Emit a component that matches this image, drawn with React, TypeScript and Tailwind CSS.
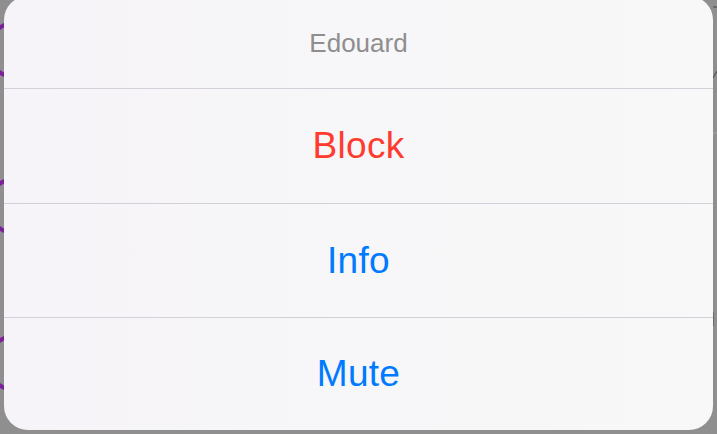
import React from "react";

function EdgeRings() {
  return (
    <svg width="4" height="434" viewBox="0 0 4 434" className="block shrink-0">
      {[50, 206, 363].map((cy) => (
        <circle key={cy} cx="15" cy={cy} r="27" fill="none" stroke="#7d1f9c" strokeWidth="4" />
      ))}
    </svg>
  );
}

function EdgeMarks() {
  return (
    <svg width="4" height="434" viewBox="0 0 4 434" className="block shrink-0">
      <path d="M0 7 H4" stroke="#5f5f5f" strokeWidth="1.5" />
      <path d="M0 78 L4 71" stroke="#5f5f5f" strokeWidth="1.5" />
      <path d="M0 133 H4" stroke="#a9a9a9" strokeWidth="1" />
      <path d="M0 312 V326" stroke="#6a6a6a" strokeWidth="2" />
    </svg>
  );
}

const actions = [
  { label: "Block", color: "text-[#ff3b30]", height: "h-[115px]" },
  { label: "Info", color: "text-[#007aff]", height: "h-[114px]" },
  { label: "Mute", color: "text-[#007aff]", height: "h-[112px]" },
];

export default function App() {
  return (
    <div className="w-[717px] h-[434px] bg-[#8f8f8f] flex overflow-hidden font-['Liberation_Sans',Arial,sans-serif]">
      <EdgeRings />
      <div className="w-[709px] h-[434px] -mt-[4px] rounded-[24px] bg-gradient-to-r from-[#f6f4f8] to-[#f8f8f8] flex flex-col overflow-hidden">
        <div className="h-[93px] shrink-0 pt-[3px] flex items-center justify-center text-[26px] text-[#8e8e8e] border-b border-[#d4d0d9]">
          Edouard
        </div>
        {actions.map((a, i) => (
          <button
            key={a.label}
            className={`${a.height} shrink-0 flex items-center justify-center text-[37px] tracking-[0.3px] ${a.color} ${
              i < actions.length - 1 ? "border-b border-[#d4d0d9]" : ""
            }`}
          >
            {a.label}
          </button>
        ))}
      </div>
      <EdgeMarks />
    </div>
  );
}
